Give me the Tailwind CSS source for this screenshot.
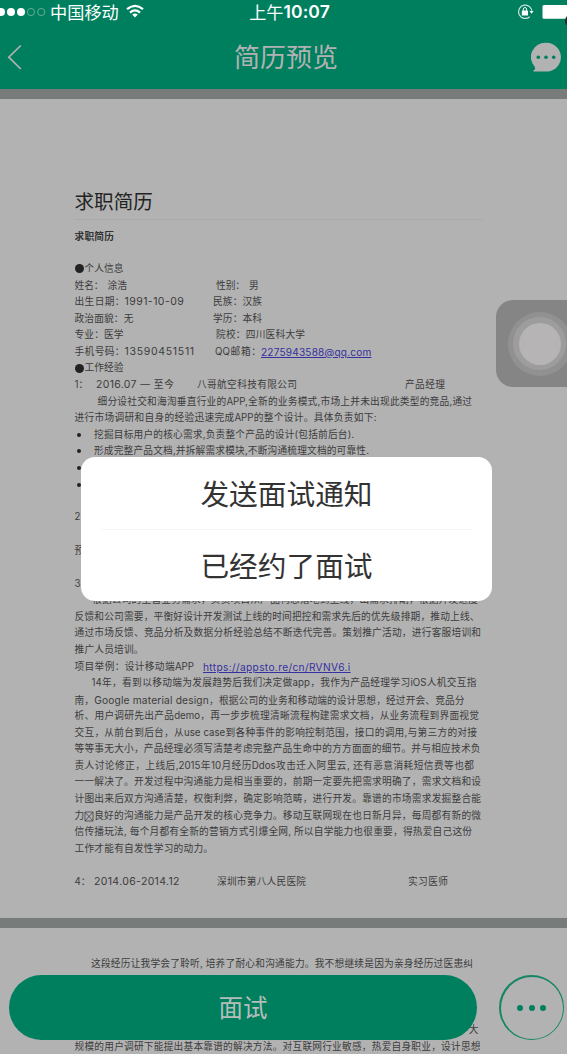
<!DOCTYPE html>
<html lang="zh-CN">
<head>
<meta charset="utf-8">
<title>简历预览</title>
<script src="https://cdn.jsdelivr.net/npm/@tailwindcss/browser@4"></script>
</head>
<body class="w-[567px] h-[1054px] overflow-hidden bg-[#b2b2b2] font-['Inter','Noto_Sans_CJK_SC',sans-serif]">
<div class="relative w-[567px] h-[1054px] overflow-hidden flex flex-col">
  <header class="h-[89px] shrink-0 bg-[#007f5f]">
    <div class="h-6 grid grid-cols-[1fr_auto_1fr] items-center text-white font-['Noto_Sans_CJK_SC',sans-serif]">
      <div class="flex items-center">
        <svg class="w-[50px] h-6 shrink-0" viewBox="0 0 50 24"><g fill="#fff"><circle cx="1" cy="11" r="4"/><circle cx="11" cy="11" r="4"/><circle cx="21" cy="11" r="4"/></g><g fill="none" stroke="#62ad98" stroke-width="1"><circle cx="31" cy="11" r="3.6"/><circle cx="41.200" cy="11" r="3.600"/></g></svg>
        <span class="text-[17.200px] leading-6 whitespace-nowrap pb-px">中国移动</span>
        <svg class="w-[18px] h-[14px] ml-[7px] mb-[3px]" viewBox="0 0 18 14" fill="none" stroke="#fff" stroke-width="2.200"><path d="M1 5.200Q9-1.500 17 5.200M4 8.600Q9 4.300 14 8.600"/><path d="M6.200 10.500Q9 8.300 11.800 10.500L9 13.500Z" fill="#fff" stroke="none"/></svg>
      </div>
      <div class="leading-6 flex items-center whitespace-nowrap pl-[12px] pb-px"><span class="text-[17.200px]">上午</span><span class="font-['Inter'] font-semibold text-[17.500px] tracking-[0.100px]">10:07</span></div>
      <div class="flex items-center justify-end">
        <svg class="w-[50px] h-6" viewBox="517 0 50 24"><path d="M531.700 11a6.700 6.700 0 1 1-1.500-4.600" fill="none" stroke="#c9e5dc" stroke-width="1.200" transform="rotate(45 525 11)"/><path d="M529.500 10h4l-2 2.800z" fill="#fff"/><rect x="521.800" y="9.500" width="6.200" height="5" rx=".6" fill="#fff"/><path d="M523.300 10V8.200a1.650 1.650 0 0 1 3.300 0V10" fill="none" stroke="#fff"/><rect x="542.500" y="4" width="30" height="13.700" rx="1.500" fill="#fff"/><circle cx="572" cy="20" r="7" fill="#292929"/></svg>
      </div>
    </div>
    <div class="h-[65px] flex items-center justify-between pl-[6px] pr-[6px] text-[#b2b2b2]">
      <svg class="w-[30px] h-[30px]" viewBox="0 0 30 30" fill="none" stroke="currentColor" stroke-width="1.700"><path d="M14.800 3.500 2.800 15.200 14.800 27"/></svg>
      <h1 class="text-[26px] leading-8 font-['Noto_Sans_CJK_SC',sans-serif] pl-[5px] pb-[2px]">简历预览</h1>
      <svg class="w-[30px] h-[30px]" viewBox="0 0 30 30"><path d="M15 .8a14.300 14.300 0 0 1 1 28.800H3.200c-1.500-.3-.8-1.500.2-1.800 1.300-.4.600-2 .3-3A14.300 14.300 0 0 1 15 .8z" fill="currentColor"/><g fill="#007f5f"><circle cx="7.300" cy="15.300" r="1.800"/><circle cx="15" cy="15.300" r="1.800"/><circle cx="22.700" cy="15.300" r="1.800"/></g></svg>
    </div>
  </header>
  <div class="h-[10px] shrink-0 bg-[#777c7a]"></div>

  <article class="h-[819px] shrink-0 pl-[74.500px] pt-[83px] text-[9.700px] text-[#3c3c3c] whitespace-nowrap [text-align-last:justify]">
    <h2 class="h-[38px] w-[408px] border-b border-[#aaaaaa] text-[19.600px] leading-[38px] text-[#222] font-['Noto_Sans_CJK_SC',sans-serif] [text-align-last:left]">求职简历</h2>
    <div class="h-[41px] pt-[8px] w-[39.500px] leading-[17px] font-bold text-[#333]">求职简历</div>

    <div class="grid auto-rows-[16.570px] leading-[16.570px]">
      <div class="flex items-center"><i class="size-[9px] rounded-full bg-[#222] mr-[1px] mb-px"></i><span class="w-[39px]">个人信息</span></div>
      <div class="flex"><span class="w-[29px] mr-[4px]">姓名：</span><span class="w-[108.500px] [text-align-last:left]">涂浩</span><span class="w-[29px] mr-[4px]">性别：</span><span>男</span></div>
      <div class="flex"><span class="w-[50px]">出生日期：</span><span class="w-[88.500px] [text-align-last:left] text-[10.500px] tracking-[0.450px]">1991-10-09</span><span class="w-[49px]">民族：汉族</span></div>
      <div class="flex"><span class="w-[138.500px] [text-align-last:left] tracking-[0.150px]">政治面貌：无</span><span class="w-[49px]">学历：本科</span></div>
      <div class="flex"><span class="w-[141.500px] [text-align-last:left] tracking-[0.150px]">专业：医学</span><span class="w-[89px]">院校：四川医科大学</span></div>
      <div class="flex"><span class="w-[50px]">手机号码：</span><span class="w-[90.500px] [text-align-last:left] text-[10.500px] tracking-[0.700px]">13590451511</span><span class="w-[46px]">QQ邮箱：</span><a class="text-[#3630a0] underline [text-align-last:left] text-[10.100px] tracking-[0.180px]">2275943588@qq.com</a></div>
      <div class="flex items-center"><i class="size-[9px] rounded-full bg-[#222] mr-[1px] mb-px"></i><span class="w-[39px]">工作经验</span></div>
      <div class="flex"><span class="w-[21.500px] [text-align-last:left]">1：</span><span class="w-[78px] mr-[23px]"><span class="text-[10.500px] tracking-[0.300px]">2016.07</span> — 至今</span><span class="w-[100px] mr-[108px]">八哥航空科技有限公司</span><span class="w-[40px]">产品经理</span></div>
      <div class="w-[374.500px] ml-[23px]">细分设社交和海淘垂直行业的APP,全新的业务模式,市场上并未出现此类型的竞品,通过</div>
      <div class="w-[302px]">进行市场调研和自身的经验迅速完成APP的整个设计。具体负责如下:</div>
      <div class="flex items-center"><i class="size-1 rounded-full bg-[#222] ml-[2px] mr-[13.500px]"></i><span class="w-[260px]">挖掘目标用户的核心需求,负责整个产品的设计(包括前后台).</span></div>
      <div class="flex items-center"><i class="size-1 rounded-full bg-[#222] ml-[2px] mr-[13.500px]"></i><span class="w-[275px]">形成完整产品文档,并拆解需求模块,不断沟通梳理文档的可靠性.</span></div>
      <div class="flex items-center"><i class="size-1 rounded-full bg-[#222] ml-[2px]"></i></div>
      <div class="flex items-center"><i class="size-1 rounded-full bg-[#222] ml-[2px]"></i></div>
      <div></div>
      <div class="[text-align-last:left]">2：</div>
      <div></div>
      <div class="[text-align-last:left]">预</div>
      <div></div>
      <div class="[text-align-last:left]">3：</div>
      <div class="w-[386px] ml-[17.500px]">根据公司的主营业务需求，负责项目从产品构思落地到上线，出需求排期，根据开发进度</div>
      <div class="w-[405px]">反馈和公司需要，平衡好设计开发测试上线的时间把控和需求先后的优先级排期，推动上线、</div>
      <div class="w-[406.500px]">通过市场反馈、竞品分析及数据分析经验总结不断迭代完善。策划推广活动，进行客服培训和</div>
      <div class="w-[69px]">推广人员培训。</div>
      <div class="flex"><span class="w-[119.500px] mr-[9px]">项目举例：设计移动端APP</span><a class="text-[#3630a0] underline [text-align-last:left] text-[10.200px] tracking-[0.330px]">https://appsto.re/cn/RVNV6.i</a></div>
      <div class="w-[385px] ml-[17px]">14年，看到以移动端为发展趋势后我们决定做app，我作为产品经理学习iOS人机交互指</div>
      <div class="w-[390px]">南，<span class="text-[10.200px] tracking-[0.160px]">Google material design</span>，根据公司的业务和移动端的设计思想，经过开会、竞品分</div>
      <div class="w-[404.500px]">析、用户调研先出产品demo，再一步步梳理清晰流程构建需求文档，从业务流程到界面视觉</div>
      <div class="w-[402.500px]">交互，从前台到后台，从use case到各种事件的影响控制范围，接口的调用,与第三方的对接</div>
      <div class="w-[406px]">等等事无大小，产品经理必须写清楚考虑完整产品生命中的方方面面的细节。并与相应技术负</div>
      <div class="w-[399.500px]">责人讨论修正，上线后,2015年10月经历Ddos攻击迁入阿里云, 还有恶意消耗短信费等也都</div>
      <div class="w-[406.500px]">一一解决了。开发过程中沟通能力是相当重要的，前期一定要先把需求明确了，需求文档和设</div>
      <div class="w-[406.500px]">计图出来后双方沟通清楚，权衡利弊，确定影响范畴，进行开发。靠谱的市场需求发掘整合能</div>
      <div class="w-[406.500px] flex"><span>力</span><svg class="w-[10px] h-[16px] shrink-0" viewBox="0 0 10 16" fill="none" stroke="#404040" stroke-width=".8"><path d="M1 4h8v9H1zM1 4l8 9M9 4l-8 9"/></svg><span class="flex-1">良好的沟通能力是产品开发的核心竞争力。移动互联网现在也日新月异，每周都有新的微</span></div>
      <div class="w-[397.500px]">信传播玩法, 每个月都有全新的营销方式引爆全网, 所以自学能力也很重要，得热爱自己这份</div>
      <div class="w-[138.500px]">工作才能有自发性学习的动力。</div>
      <div></div>
      <div class="flex"><span class="w-[19.500px] [text-align-last:left]">4：</span><span class="w-[123px] [text-align-last:left] text-[10.500px] tracking-[0.350px]">2014.06-2014.12</span><span class="w-[89px] mr-[102px]">深圳市第八人民医院</span><span class="w-[40px]">实习医师</span></div>
    </div>
  </article>

  <div class="h-[10px] shrink-0 bg-[#777c7a]"></div>
  <article class="h-[126px] shrink-0 pl-[74.500px] pt-[28px] text-[9.700px] leading-[16.570px] text-[#3c3c3c] whitespace-nowrap [text-align-last:justify]">
    <div class="w-[382px] ml-[16.500px]">这段经历让我学会了聆听, 培养了耐心和沟通能力。我不想继续是因为亲身经历过医患纠</div>
    <div class="h-[49.700px]"></div>
    <div class="w-[404px] [text-align-last:right]">大</div>
    <div class="w-[406px]">规模的用户调研下能提出基本靠谱的解决方法。对互联网行业敏感，热爱自身职业，设计思想</div>
  </article>

  <div class="absolute left-[9px] top-[975px] w-[468px] h-[65px] rounded-full bg-[#007f5f] flex items-center justify-center text-[24.500px] text-[#b5bdb9] font-['Noto_Sans_CJK_SC',sans-serif]">面试</div>
  <div class="absolute left-[499px] top-[975px] size-[65px] rounded-full bg-[#168565] p-[1.500px]">
    <div class="size-[62px] rounded-full bg-[#b2b2b2] flex items-center justify-center gap-[5.700px]">
      <i class="size-[6px] rounded-full bg-[#007f5f]"></i><i class="size-[6px] rounded-full bg-[#007f5f]"></i><i class="size-[6px] rounded-full bg-[#007f5f]"></i>
    </div>
  </div>

  <div class="absolute left-[496px] top-[300px] w-[87px] h-[87px] rounded-[17px] bg-[#868585] flex items-center justify-center">
    <div class="size-[64px] rounded-full bg-[#929191] flex items-center justify-center">
      <div class="size-[53px] rounded-full bg-[#9e9d9d] flex items-center justify-center">
        <div class="size-[42px] rounded-full bg-[#b6b4b4]"></div>
      </div>
    </div>
  </div>

  <div class="absolute left-[81px] top-[457px] w-[411px] h-[144px] rounded-[14px] bg-white px-5 text-[28.700px] text-[#333] text-center font-['Noto_Sans_CJK_SC',sans-serif]">
    <div class="h-[73px] leading-[72px] border-b border-[#f5f5f5]">发送面试通知</div>
    <div class="h-[71px] leading-[69px]">已经约了面试</div>
  </div>
</div>
</body>
</html>
